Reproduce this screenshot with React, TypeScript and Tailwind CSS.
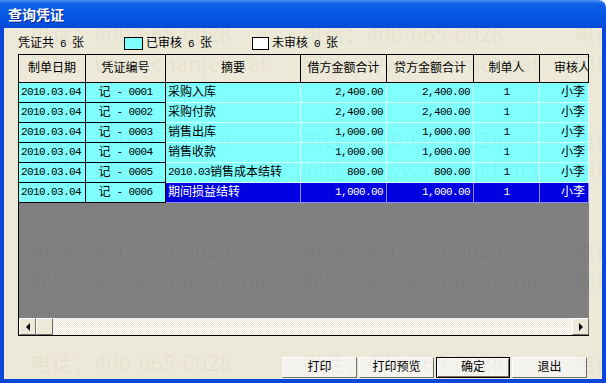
import React from 'react';

interface Voucher {
  date: string;
  no: string;
  summary: React.ReactNode;
  debit: string;
  credit: string;
  maker: string;
  auditor: string;
}

const N = ({ children }: { children: React.ReactNode }) => (
  <span className="whitespace-pre text-[11px] tracking-[-0.6px]">{children}</span>
);

const vouchers: Voucher[] = [
  { date: '2010.03.04', no: '0001', summary: '采购入库', debit: '2,400.00', credit: '2,400.00', maker: '1', auditor: '小李' },
  { date: '2010.03.04', no: '0002', summary: '采购付款', debit: '2,400.00', credit: '2,400.00', maker: '1', auditor: '小李' },
  { date: '2010.03.04', no: '0003', summary: '销售出库', debit: '1,000.00', credit: '1,000.00', maker: '1', auditor: '小李' },
  { date: '2010.03.04', no: '0004', summary: '销售收款', debit: '1,000.00', credit: '1,000.00', maker: '1', auditor: '小李' },
  {
    date: '2010.03.04',
    no: '0005',
    summary: (
      <>
        <N>2010.03</N>销售成本结转
      </>
    ),
    debit: '800.00',
    credit: '800.00',
    maker: '1',
    auditor: '小李',
  },
  { date: '2010.03.04', no: '0006', summary: '期间损益结转', debit: '1,000.00', credit: '1,000.00', maker: '1', auditor: '小李' },
];

const SELECTED = 5;

const headers = [
  { label: '制单日期', w: 'w-[67px]' },
  { label: '凭证编号', w: 'w-[80px]' },
  { label: '摘要', w: 'w-[135px]' },
  { label: '借方金额合计', w: 'w-[86px]' },
  { label: '贷方金额合计', w: 'w-[87px]' },
  { label: '制单人', w: 'w-[66px]' },
];

function Button({ label, isDefault }: { label: string; isDefault?: boolean }) {
  return (
    <div
      className={`flex h-[21px] items-center justify-center bg-[#f4f3ee] ${
        isDefault ? 'w-[74px] border border-black shadow-[inset_1px_1px_0_#fff,inset_-1px_-1px_0_#716f64]' : 'w-[75px] border border-t-white border-l-white border-r-[#716f64] border-b-[#716f64]'
      }`}
    >
      {label}
    </div>
  );
}

function Watermark() {
  const rows = [18, 124, 235, 347];
  const cols = [30, 302, 574];
  return (
    <div className="pointer-events-none absolute inset-0 [font-family:'Noto_Sans_CJK_SC',sans-serif] text-[21px] leading-[30px] tracking-[0.5px] text-black/[0.045]">
      {rows.map((top) =>
        cols.map((left) => (
          <div key={`${top}-${left}`} className="absolute whitespace-nowrap" style={{ top, left }}>
            <div>电话：400-665-0028</div>
            <div>网址：www.chanjet.net</div>
          </div>
        ))
      )}
    </div>
  );
}

export default function App() {
  return (
    <div className="relative flex h-[383px] w-[606px] flex-col overflow-hidden bg-[#f2f2ee] [font-family:'Liberation_Mono','Noto_Sans_CJK_SC',monospace] text-[12px] leading-none text-black">
      {/* Title bar */}
      <div className="flex h-[28px] shrink-0 items-center rounded-tr-[8px] bg-[linear-gradient(to_bottom,#4a90f2_0%,#0f62ea_14%,#0858e6_45%,#0552e2_75%,#0a48d4_100%)] pl-[8px]">
        <span className="[font-family:'Noto_Sans_CJK_SC',sans-serif] text-[14px] font-bold text-white [text-shadow:1px_1px_0_#0a2a8a]">
          查询凭证
        </span>
      </div>

      {/* Body */}
      <div className="flex flex-1 flex-col border-x-4 border-b-4 border-[#0a46d8] bg-[#ece9d8] pl-[14px] pr-[13px]">
        {/* Summary line */}
        <div className="mt-[9px] flex h-[13px] items-center">
          <span className="w-[106px]">
            凭证共<N> 6 </N>张
          </span>
          <span className="h-[13px] w-[19px] border border-black bg-[#80ffff]" />
          <span className="ml-[3px] w-[106px]">
            已审核<N> 6 </N>张
          </span>
          <span className="h-[13px] w-[17px] border border-black bg-white" />
          <span className="ml-[3px]">
            未审核<N> 0 </N>张
          </span>
        </div>

        {/* Grid */}
        <div className="mt-[4px] flex h-[282px] w-[571px] flex-col border-l border-t border-b border-black bg-[#808080]">
          <div className="flex h-[28px] shrink-0 bg-[#ece9d8]">
            {headers.map((h) => (
              <div key={h.label} className={`${h.w} flex items-center justify-center border-r border-b border-black`}>
                {h.label}
              </div>
            ))}
            <div className="flex w-[49px] items-center overflow-hidden whitespace-nowrap border-r border-b border-black pl-[14px]">
              审核人
            </div>
          </div>

          {vouchers.map((v, i) => {
            const sel = i === SELECTED;
            const right = sel
              ? 'bg-[#0000e0] text-white border-r border-b border-[#8c8cff]'
              : 'bg-[#80ffff] border-r border-b border-[#d8ffff]';
            return (
              <div key={v.no} className="flex h-[20px] shrink-0">
                <div className="flex w-[67px] items-center border-r border-b border-black bg-[#80ffff] pl-[2px]">
                  <N>{v.date}</N>
                </div>
                <div className="flex w-[80px] items-center justify-center border-r border-b border-black bg-[#80ffff]">
                  <span>记</span>
                  <N>{`\u00a0-\u00a0${v.no}`}</N>
                </div>
                <div className={`flex w-[135px] items-center pl-[2px] ${right}`}>{v.summary}</div>
                <div className={`flex w-[86px] items-center justify-end pr-[3px] ${right}`}>
                  <N>{v.debit}</N>
                </div>
                <div className={`flex w-[87px] items-center justify-end pr-[3px] ${right}`}>
                  <N>{v.credit}</N>
                </div>
                <div className={`flex w-[66px] items-center justify-center ${right}`}>
                  <N>{v.maker}</N>
                </div>
                <div className={`flex w-[49px] items-center justify-end pr-[3px] ${right}`}>{v.auditor}</div>
              </div>
            );
          })}

          <div className="flex-1" />

          {/* Horizontal scrollbar */}
          <div className="flex h-[17px] shrink-0 bg-[repeating-conic-gradient(#ffffff_0_25%,#ece9d8_0_50%)] bg-[length:2px_2px]">
            <div className="flex h-[17px] w-[17px] items-center justify-center border border-t-white border-l-white border-r-[#716f64] border-b-[#716f64] bg-[#ece9d8]">
              <span className="h-0 w-0 border-y-[4px] border-r-[4px] border-y-transparent border-r-black" />
            </div>
            <div className="h-[17px] w-[17px] border border-t-white border-l-white border-r-[#716f64] border-b-[#716f64] bg-[#ece9d8]" />
            <div className="flex-1" />
            <div className="flex h-[17px] w-[17px] items-center justify-center border border-t-white border-l-white border-r-[#716f64] border-b-[#716f64] bg-[#ece9d8]">
              <span className="h-0 w-0 border-y-[4px] border-l-[4px] border-y-transparent border-l-black" />
            </div>
          </div>
        </div>

        {/* Buttons */}
        <div className="mt-[21px] flex justify-end gap-[2px] pr-[2px]">
          <Button label="打印" />
          <Button label="打印预览" />
          <Button label="确定" isDefault />
          <Button label="退出" />
        </div>
      </div>

      <Watermark />
    </div>
  );
}
